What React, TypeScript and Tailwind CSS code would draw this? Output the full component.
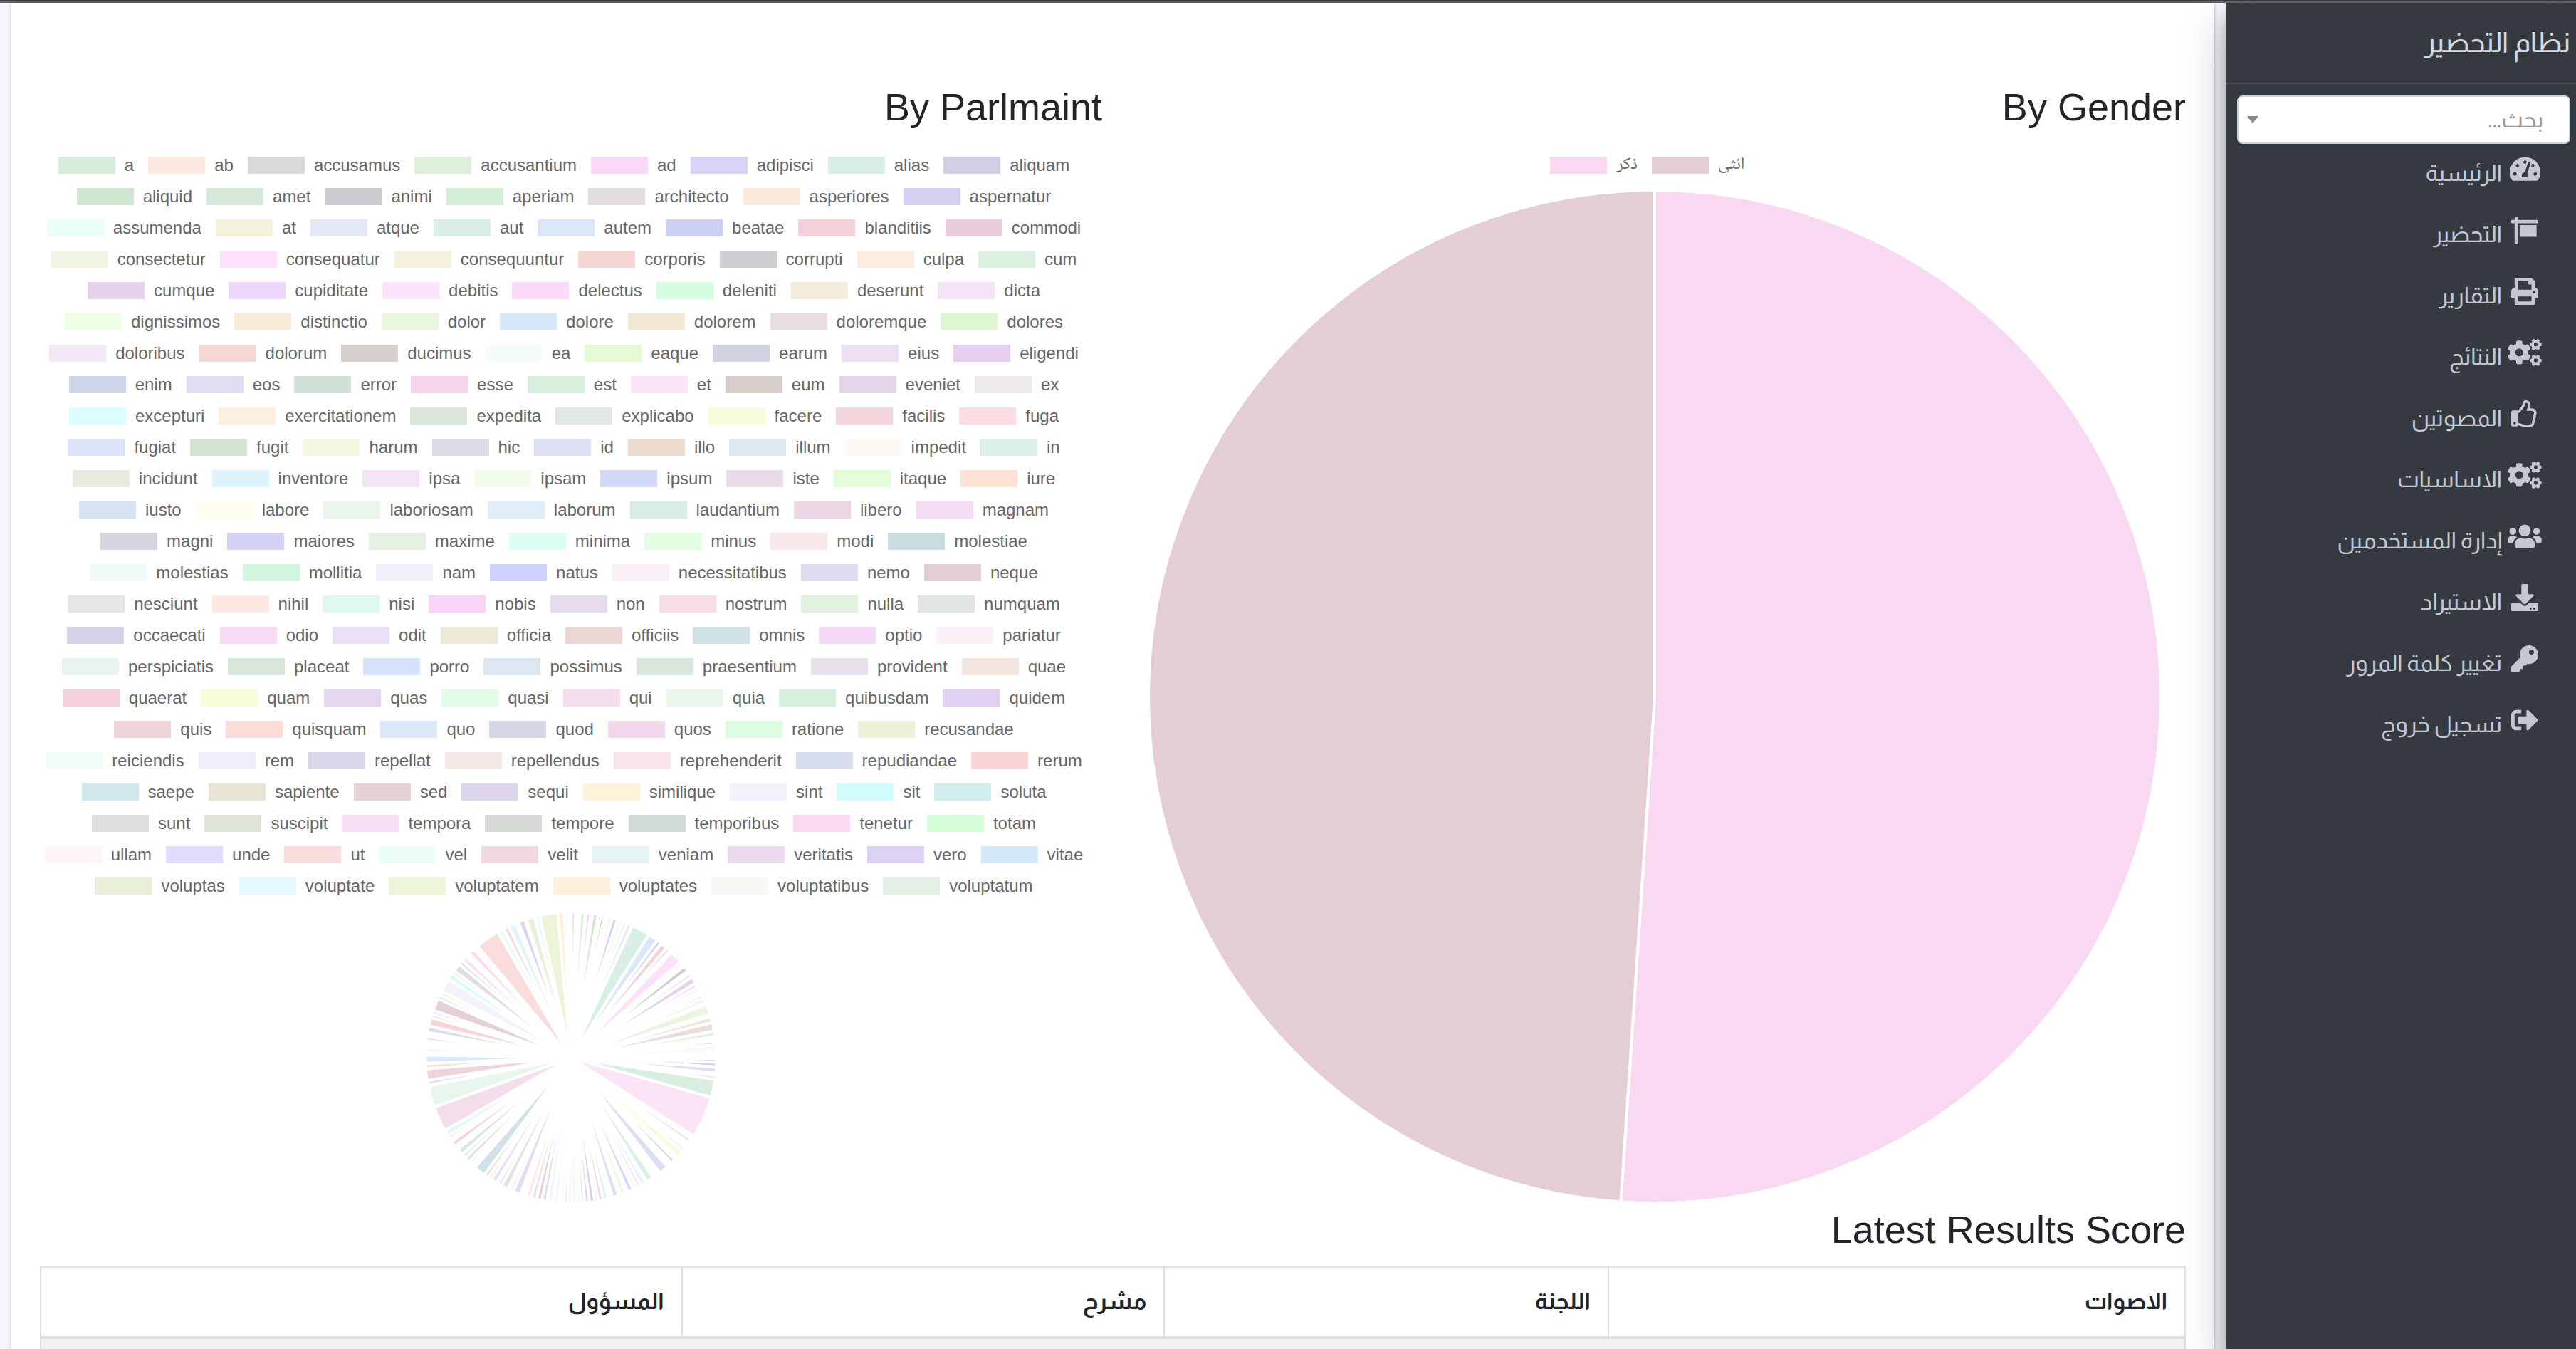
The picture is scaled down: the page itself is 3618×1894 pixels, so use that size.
import type { ComponentType } from 'react';
import {
  FaCogs,
  FaDownload,
  FaKey,
  FaPrint,
  FaRegThumbsUp,
  FaSign,
  FaSignOutAlt,
  FaTachometerAlt,
  FaUsers,
} from 'react-icons/fa';

type Entry = [label: string, color: string];

const parliamentRows: Entry[][] = [
  [['a', '#d5ecdb'], ['ab', '#fee9e2'], ['accusamus', '#d9d9db'], ['accusantium', '#deefdc'], ['ad', '#f9d9f7'], ['adipisci', '#dad2f8'], ['alias', '#d7efe4'], ['aliquam', '#d1cee6']],
  [['aliquid', '#d1e6cf'], ['amet', '#d6e8da'], ['animi', '#cccdd1'], ['aperiam', '#d3efd6'], ['architecto', '#e2dee0'], ['asperiores', '#fbebdc'], ['aspernatur', '#d7d0f0']],
  [['assumenda', '#eafff5'], ['at', '#f3f2da'], ['atque', '#e3e9f5'], ['aut', '#d9efe5'], ['autem', '#dbe7f8'], ['beatae', '#cdd1f8'], ['blanditiis', '#f5d1d9'], ['commodi', '#eacbdc']],
  [['consectetur', '#f0f6e5'], ['consequatur', '#fde1fa'], ['consequuntur', '#f4f2de'], ['corporis', '#f5d6d3'], ['corrupti', '#cfccd2'], ['culpa', '#fdebdf'], ['cum', '#dcf1e1']],
  [['cumque', '#e5d3ec'], ['cupiditate', '#edd7fe'], ['debitis', '#fce4fa'], ['delectus', '#fad9f9'], ['deleniti', '#d5fee1'], ['deserunt', '#f3ecdd'], ['dicta', '#f5e2f8']],
  [['dignissimos', '#ecfee6'], ['distinctio', '#f8ecd9'], ['dolor', '#e9f5de'], ['dolore', '#d3e7f8'], ['dolorem', '#f2e7d3'], ['doloremque', '#e9dde0'], ['dolores', '#dff6d2']],
  [['doloribus', '#f3e8f6'], ['dolorum', '#f6d9d7'], ['ducimus', '#d5d0cd'], ['ea', '#f4fdfb'], ['eaque', '#e3fad3'], ['earum', '#d0d4e2'], ['eius', '#ede0f4'], ['eligendi', '#e5d0f2']],
  [['enim', '#ced4ea'], ['eos', '#deddf1'], ['error', '#d0e1d8'], ['esse', '#f8d4ec'], ['est', '#d8eedf'], ['et', '#fbe4f6'], ['eum', '#d8cecc'], ['eveniet', '#e5d5e8'], ['ex', '#ece8eb']],
  [['excepturi', '#dcfefe'], ['exercitationem', '#fbefe0'], ['expedita', '#dbe6da'], ['explicabo', '#e0e9e8'], ['facere', '#f9fbdd'], ['facilis', '#f3d6db'], ['fuga', '#fbdce3']],
  [['fugiat', '#dde2fa'], ['fugit', '#d2e4d1'], ['harum', '#f6f8e2'], ['hic', '#dddae6'], ['id', '#dcdff4'], ['illo', '#eddacf'], ['illum', '#dde8ef'], ['impedit', '#fff9f6'], ['in', '#daf0e6']],
  [['incidunt', '#eaeae1'], ['inventore', '#dbf3fc'], ['ipsa', '#f4e3f4'], ['ipsam', '#f1fdea'], ['ipsum', '#d3d8f7'], ['iste', '#eadbe9'], ['itaque', '#e2fed9'], ['iure', '#fde3d5']],
  [['iusto', '#d5e2f2'], ['labore', '#fffdee'], ['laboriosam', '#e8f6ec'], ['laborum', '#dfedf9'], ['laudantium', '#d7ece4'], ['libero', '#ecd6e3'], ['magnam', '#f3dbf4']],
  [['magni', '#d4d5de'], ['maiores', '#d4d1f6'], ['maxime', '#e6f1e3'], ['minima', '#defdf2'], ['minus', '#e3fde2'], ['modi', '#f8e9e9'], ['molestiae', '#ccdde1']],
  [['molestias', '#f1fbf6'], ['mollitia', '#d2f5e0'], ['nam', '#f1eff9'], ['natus', '#cfd1fe'], ['necessitatibus', '#fbf0f8'], ['nemo', '#dddcef'], ['neque', '#e1cfd3']],
  [['nesciunt', '#e5e5e3'], ['nihil', '#fee9e2'], ['nisi', '#dcf8f0'], ['nobis', '#fad4f6'], ['non', '#e6daee'], ['nostrum', '#f8dde8'], ['nulla', '#e0f2df'], ['numquam', '#e1e4e5']],
  [['occaecati', '#d7d2e9'], ['odio', '#f9daf4'], ['odit', '#e9dff7'], ['officia', '#ece9d6'], ['officiis', '#ecd6d4'], ['omnis', '#d0e2e8'], ['optio', '#f4d7f4'], ['pariatur', '#fbf1f9']],
  [['perspiciatis', '#e8f4f2'], ['placeat', '#d8e7d9'], ['porro', '#d9e2fc'], ['possimus', '#dde7f1'], ['praesentium', '#d9e8db'], ['provident', '#eadfed'], ['quae', '#f4e5df']],
  [['quaerat', '#f6d0df'], ['quam', '#f7fdd9'], ['quas', '#e4d7ef'], ['quasi', '#e1fdea'], ['qui', '#f5deeb'], ['quia', '#e8f6eb'], ['quibusdam', '#d5efdf'], ['quidem', '#e3d2f3']],
  [['quis', '#efd4d7'], ['quisquam', '#fbddd8'], ['quo', '#dae8f8'], ['quod', '#d3d7e6'], ['quos', '#f1d8ea'], ['ratione', '#dcfce2'], ['recusandae', '#eef1d8']],
  [['reiciendis', '#f4fcfc'], ['rem', '#eeedfa'], ['repellat', '#d8d8ea'], ['repellendus', '#f3e7e5'], ['reprehenderit', '#fbe4e9'], ['repudiandae', '#d8ddee'], ['rerum', '#fad4d4']],
  [['saepe', '#cfe6ea'], ['sapiente', '#e7e4d4'], ['sed', '#e5d1d4'], ['sequi', '#ddd6ea'], ['similique', '#fff2db'], ['sint', '#f4f2fd'], ['sit', '#d1fdfc'], ['soluta', '#d2eeec']],
  [['sunt', '#dedee0'], ['suscipit', '#dde4d5'], ['tempora', '#f8dff6'], ['tempore', '#d5dad4'], ['temporibus', '#d2dbd9'], ['tenetur', '#fad9f0'], ['totam', '#d6fed6']],
  [['ullam', '#fff4f6'], ['unde', '#e0ddfd'], ['ut', '#f9dddc'], ['vel', '#ebfdf5'], ['velit', '#f2d9e0'], ['veniam', '#e6f4f5'], ['veritatis', '#ecdbee'], ['vero', '#dcd2f3'], ['vitae', '#d3e8f8']],
  [['voluptas', '#e8f0da'], ['voluptate', '#e6f9fd'], ['voluptatem', '#ecf5da'], ['voluptates', '#fff0da'], ['voluptatibus', '#f6f9f3'], ['voluptatum', '#e4efe6']],
];

const parliamentColors = new Map(parliamentRows.flat());

// Rim point at the middle of each visible slice and the slice's width along the rim.
const rimCenter = { x: 722, y: 704 };
const rimRadius = 608;
const slices: [label: string, x: number, y: number, width: number][] = [
  ['a', 732, 96, 6], ['accusantium', 771, 98, 10], ['adipisci', 795, 100, 5], ['aliquid', 824, 104, 11],
  ['animi', 855, 110, 4], ['asperiores', 887, 120, 4], ['aspernatur', 906, 124, 10], ['assumenda', 928, 132, 9],
  ['at', 947, 141, 6], ['atque', 966, 149, 10], ['aut', 1013, 171, 66], ['autem', 1065, 203, 31],
  ['beatae', 1090, 221, 8], ['blanditiis', 1109, 238, 17], ['commodi', 1129, 251, 4], ['consequatur', 1162, 283, 42],
  ['consequuntur', 1184, 309, 3], ['corrupti', 1202, 331, 13], ['cum', 1222, 358, 7], ['cumque', 1237, 379, 17],
  ['cupiditate', 1250, 401, 7], ['debitis', 1259, 414, 4], ['dicta', 1274, 447, 4], ['dignissimos', 1281, 464, 10],
  ['dolor', 1297, 501, 30], ['dolorem', 1309, 544, 14], ['doloremque', 1318, 575, 25], ['dolores', 1323, 605, 11],
  ['ducimus', 1328, 643, 3], ['ea', 1331, 666, 18], ['eligendi', 1331, 715, 4], ['enim', 1331, 733, 8],
  ['eos', 1330, 756, 13], ['esse', 1326, 787, 4], ['est', 1318, 833, 64], ['et', 1278, 954, 166],
  ['ex', 1220, 1053, 9], ['explicabo', 1194, 1088, 4], ['facere', 1177, 1106, 22], ['fugit', 1149, 1137, 8],
  ['id', 1110, 1173, 28], ['impedit', 1067, 1195, 4], ['in', 1053, 1215, 20], ['inventore', 1023, 1230, 9],
  ['ipsa', 1005, 1241, 9], ['ipsam', 987, 1248, 9], ['ipsum', 970, 1258, 12], ['itaque', 940, 1271, 9],
  ['iusto', 908, 1281, 14], ['labore', 886, 1288, 4], ['laborum', 867, 1294, 8], ['libero', 846, 1298, 8],
  ['magnam', 828, 1303, 4], ['magni', 810, 1305, 11], ['maiores', 789, 1309, 8], ['maxime', 770, 1311, 8],
  ['minima', 753, 1312, 5], ['minus', 736, 1313, 8], ['modi', 717, 1313, 7], ['molestiae', 700, 1313, 4],
  ['molestias', 685, 1312, 4], ['nam', 661, 1310, 7], ['necessitatibus', 635, 1306, 13], ['nemo', 610, 1302, 11],
  ['neque', 588, 1298, 11], ['nesciunt', 566, 1292, 11], ['nihil', 544, 1286, 11], ['non', 495, 1268, 22],
  ['nostrum', 474, 1258, 4], ['numquam', 445, 1244, 18], ['occaecati', 426, 1232, 4], ['odit', 401, 1216, 15],
  ['officia', 384, 1206, 4], ['officiis', 369, 1196, 8], ['omnis', 341, 1177, 38], ['perspiciatis', 303, 1143, 4],
  ['placeat', 290, 1128, 11], ['porro', 275, 1115, 5], ['praesentium', 261, 1095, 15], ['quaerat', 234, 1061, 12],
  ['quas', 214, 1036, 4], ['quasi', 206, 1018, 14], ['qui', 171, 960, 95], ['quia', 136, 867, 79],
  ['quidem', 124, 809, 6], ['quis', 118, 775, 37], ['quisquam', 115, 739, 9], ['quo', 114, 710, 22],
  ['ratione', 115, 671, 4], ['repellat', 120, 625, 4], ['repudiandae', 127, 586, 14], ['rerum', 135, 554, 25],
  ['saepe', 140, 529, 4], ['sapiente', 145, 514, 4], ['sed', 157, 482, 40], ['sequi', 171, 451, 4],
  ['similique', 179, 434, 8], ['sint', 197, 401, 46], ['sit', 220, 366, 14], ['soluta', 232, 349, 4],
  ['sunt', 248, 330, 22], ['suscipit', 264, 308, 9], ['tempora', 278, 293, 12], ['tenetur', 308, 262, 13],
  ['ut', 373, 207, 91], ['vel', 429, 174, 17], ['velit', 451, 162, 11], ['veniam', 478, 152, 22],
  ['vero', 516, 134, 15], ['voluptas', 553, 123, 22], ['voluptate', 581, 114, 11], ['voluptatem', 628, 104, 65],
  ['voluptates', 680, 98, 16], ['voluptatibus', 702, 97, 5],
];

// Pie wedge around the origin; angles are radians measured clockwise from the top.
function wedge(start: number, end: number, radius: number) {
  const at = (angle: number) => `${(Math.sin(angle) * radius).toFixed(2)} ${(-Math.cos(angle) * radius).toFixed(2)}`;
  const large = end - start > Math.PI ? 1 : 0;
  return `M0 0L${at(start)}A${radius} ${radius} 0 ${large} 1 ${at(end)}Z`;
}

function ParliamentPie() {
  const border = 12;
  const radius = rimRadius + border / 2;
  return (
    <svg viewBox="-615 -615 1230 1230" className="mt-[14px] w-[410px]" role="img" aria-label="By Parlmaint">
      {slices.map(([label, x, y, width]) => {
        const middle = Math.atan2(x - rimCenter.x, rimCenter.y - y);
        const half = (width + border) / 2 / rimRadius;
        return (
          <path
            key={label}
            d={wedge(middle - half, middle + half, radius)}
            fill={parliamentColors.get(label)}
            stroke="#fff"
            strokeWidth={border}
            strokeLinejoin="bevel"
          />
        );
      })}
    </svg>
  );
}

function GenderPie() {
  const split = Math.PI + 0.067;
  return (
    <svg viewBox="-712 -712 1424 1424" className="mt-3 w-full max-w-[1424px]" role="img" aria-label="By Gender">
      <path d={wedge(0, split, 711)} fill="#f8d9f1" stroke="#fff" strokeWidth="4" />
      <path d={wedge(split, Math.PI * 2, 711)} fill="#e4cdd3" stroke="#fff" strokeWidth="4" />
    </svg>
  );
}

function LegendRow({ entries }: { entries: Entry[] }) {
  return (
    <li className="flex h-11 items-center justify-center">
      {entries.map(([label, color]) => (
        <span key={label} className="flex items-center">
          <span className="h-6 w-20 shrink-0" style={{ backgroundColor: color }} />
          <span className="pr-5 pl-[13px]">{label}</span>
        </span>
      ))}
    </li>
  );
}

const genderLegend: Entry[] = [
  ['ذكر', '#f8d9f1'],
  ['انثى', '#e4cdd3'],
];

function Heading({ children }: { children: string }) {
  return <h2 className="text-[54px] leading-[68px] text-[#212529]">{children}</h2>;
}

const menu: { label: string; icon: ComponentType<{ className?: string }>; size: string }[] = [
  { label: 'الرئيسية', icon: FaTachometerAlt, size: 'w-[43px]' },
  { label: 'التحضير', icon: FaSign, size: 'w-[38px]' },
  { label: 'التقارير', icon: FaPrint, size: 'w-[38px]' },
  { label: 'النتائج', icon: FaCogs, size: 'w-12' },
  { label: 'المصوتين', icon: FaRegThumbsUp, size: 'w-[38px]' },
  { label: 'الاساسيات', icon: FaCogs, size: 'w-12' },
  { label: 'إدارة المستخدمين', icon: FaUsers, size: 'w-12' },
  { label: 'الاستيراد', icon: FaDownload, size: 'w-[38px]' },
  { label: 'تغيير كلمة المرور', icon: FaKey, size: 'w-[38px]' },
  { label: 'تسجيل خروج', icon: FaSignOutAlt, size: 'w-[38px]' },
];

function Sidebar() {
  return (
    <aside className="relative z-10 flex w-[492px] shrink-0 flex-col bg-[#353a41] font-['Almarai','Cairo','DejaVu_Sans',sans-serif] shadow-[0_28px_56px_rgba(0,0,0,0.25),0_20px_20px_rgba(0,0,0,0.22)]">
      <a href="#" className="flex h-[114px] items-center border-b-2 border-[#4b545c] px-2 text-[39px] leading-[60px] text-white/80">
        نظام التحضير
      </a>
      <div className="relative mx-2 mt-4 w-[468px]">
        <select
          aria-label="بحث"
          className="h-[68px] w-full appearance-none rounded-lg border-2 border-[#ced4da] bg-white pr-9 pl-12 text-[32px] text-[#999]"
        >
          <option>بحث...</option>
        </select>
        <span className="pointer-events-none absolute top-[29px] left-[14px] border-x-8 border-t-10 border-x-transparent border-t-[#888]" />
      </div>
      <nav className="-mt-0.5">
        <ul>
          {menu.map(({ label, icon: Icon, size }, i) => (
            <li key={i}>
              <a href="#" className="flex h-[86px] items-center gap-1.5 pr-[46px] text-[32px] leading-[48px] text-[#c2c7d0]">
                <span className="flex w-[52px] shrink-0 justify-center pb-3">
                  <Icon className={`h-[38px] shrink-0 ${size}`} />
                </span>
                {label}
              </a>
            </li>
          ))}
        </ul>
      </nav>
    </aside>
  );
}

const columns = [
  { label: 'الاصوات', width: 'w-[26.9%]' },
  { label: 'اللجنة', width: 'w-[20.7%]' },
  { label: 'مشرح', width: 'w-[22.5%]' },
  { label: 'المسؤول', width: 'w-[29.9%]' },
];

export default function App() {
  return (
    <div dir="rtl" className="flex h-screen flex-col overflow-hidden bg-[#f4f6f9] font-['Liberation_Sans',sans-serif] text-[#212529]">
      <div className="h-1 shrink-0 border-b-2 border-[#636467] bg-[#38393d]" />
      <div className="flex min-h-0 flex-1">
        <Sidebar />
        <main className="min-w-0 flex-1 px-4">
          <section className="h-full bg-white px-10 pt-[112px] shadow-[0_0_2px_rgba(0,0,0,0.125),0_2px_6px_rgba(0,0,0,0.2)]">
            <div className="grid grid-cols-2 gap-[30px]">
              <div className="flex flex-col">
                <Heading>By Gender</Heading>
                <div dir="ltr" className="mt-[26px] flex flex-col items-center">
                  <ul className="font-['Noto_Naskh_Arabic','DejaVu_Sans',sans-serif] text-2xl text-[#666]">
                    <LegendRow entries={genderLegend} />
                  </ul>
                  <GenderPie />
                </div>
              </div>
              <div className="flex flex-col">
                <Heading>By Parlmaint</Heading>
                <div dir="ltr" className="mt-[26px] flex flex-col items-center">
                  <ul className="text-2xl text-[#666]">
                    {parliamentRows.map((entries, i) => (
                      <LegendRow key={i} entries={entries} />
                    ))}
                  </ul>
                  <ParliamentPie />
                </div>
              </div>
            </div>
            <div className="mt-0.5 mb-[18px]">
              <Heading>Latest Results Score</Heading>
            </div>
            <table className="w-full table-fixed border-collapse border-2 border-[#dee2e6] font-['Almarai','Cairo','DejaVu_Sans',sans-serif]">
              <thead>
                <tr>
                  {columns.map(({ label, width }) => (
                    <th
                      key={label}
                      scope="col"
                      className={`${width} h-[99px] border-2 border-b-4 border-[#dee2e6] px-6 pb-0.5 text-start text-[32px] leading-[48px] font-bold`}
                    >
                      {label}
                    </th>
                  ))}
                </tr>
              </thead>
              <tbody>
                <tr className="h-24 bg-[#f2f2f2]">
                  <td colSpan={4} />
                </tr>
              </tbody>
            </table>
          </section>
        </main>
      </div>
    </div>
  );
}
